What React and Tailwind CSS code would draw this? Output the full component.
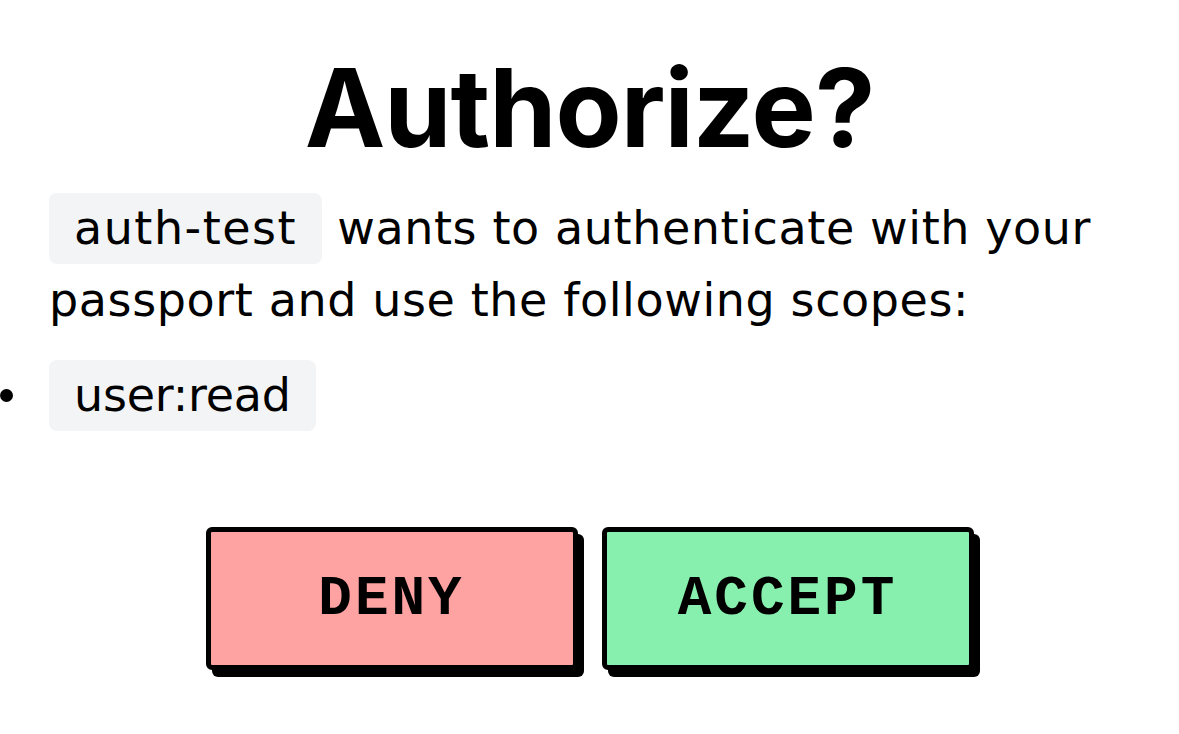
import React from "react";

const mono = { fontFamily: "'Liberation Mono', 'DejaVu Sans Mono', monospace" };

export default function App() {
  return (
    <div
      className="min-h-screen bg-white text-black"
      style={{ fontFamily: "'DejaVu Sans', 'Noto Sans', sans-serif" }}
    >
      <div className="pt-[48px]">
        <h1
          className="text-center text-[108px] font-bold leading-[120px] tracking-[-1px]"
          style={{ fontFamily: "Inter, 'Noto Sans', sans-serif" }}
        >
          Authorize?
        </h1>

        <p className="ml-[49px] mt-[24px] w-[1100px] text-[46px] leading-[72px] tracking-[0.6px]">
          <span className="inline-block rounded-lg bg-gray-100 px-[25px] leading-[71px] tracking-[1.5px]">
            auth-test
          </span>{" "}
          wants to authenticate with your passport and use the following scopes:
        </p>

        <ul className="mt-[24px] text-[46px] leading-[71px]">
          <li className="flex items-center">
            <span className="h-[13px] w-[13px] rounded-full bg-black" />
            <span className="ml-[36px] inline-block rounded-lg bg-gray-100 px-[25px] tracking-[-0.2px]">
              user:read
            </span>
          </li>
        </ul>
      </div>

      <div className="mt-[96px] flex justify-center gap-[24px]">
        <button
          className="h-[143px] w-[372px] rounded-[6px] border-[5px] border-black bg-red-300 text-[56px] font-bold tracking-[3px] shadow-[6px_7px_0_0_#000]"
          style={mono}
        >
          DENY
        </button>
        <button
          className="h-[143px] w-[372px] rounded-[6px] border-[5px] border-black bg-[#88f0ae] text-[56px] font-bold tracking-[3px] shadow-[6px_7px_0_0_#000]"
          style={mono}
        >
          ACCEPT
        </button>
      </div>
    </div>
  );
}
